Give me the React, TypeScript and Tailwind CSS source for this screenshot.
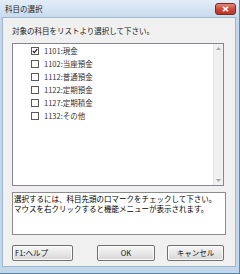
import React from "react";

const font = { fontFamily: '"Noto Sans CJK JP", "Liberation Sans", sans-serif' };

function Check({ checked }: { checked?: boolean }) {
  return (
    <div className="w-[8px] h-[8px] border border-[#5a5a5a] bg-white flex items-center justify-center shrink-0">
      {checked && (
        <svg width="6" height="6" viewBox="0 0 6 6">
          <path d="M0.8 3 L2.4 4.6 L5.2 1.2" stroke="#222" strokeWidth="1.3" fill="none" />
        </svg>
      )}
    </div>
  );
}

function Btn({ w, label }: { w: string; label: string }) {
  return (
    <div
      className={`${w} h-[16px] border border-[#707070] rounded-[2px] bg-gradient-to-b from-[#f6f6f6] via-[#e8e8e8] to-[#d6d6d6] flex items-center text-[7.5px] text-[#111] shadow-[inset_0_0_0_1px_#fbfbfb]`}
    >
      {label}
    </div>
  );
}

export default function App() {
  const items = [
    ["1101:現金", true],
    ["1102:当座預金", false],
    ["1112:普通預金", false],
    ["1122:定期預金", false],
    ["1127:定期積金", false],
    ["1132:その他", false],
  ] as const;
  return (
    <div
      className="w-[240px] h-[274px] bg-[#c3d7ec] flex flex-col overflow-hidden border-r border-b border-[#5f87a8]"
      style={font}
    >
      <div className="h-[17px] shrink-0 flex items-center justify-between pl-[5px] pr-[3px] bg-gradient-to-b from-[#e3edf8] to-[#c8dbef]">
        <span className="text-[7.5px] text-[#1e1e1e] leading-none mt-[1px]">科目の選択</span>
        <div className="w-[21px] h-[12px] mt-[1px] rounded-[3px] border border-[#7a2a22] bg-gradient-to-b from-[#e2887a] via-[#cc4a3a] to-[#b8352a] flex items-center justify-center">
          <svg width="7" height="6" viewBox="0 0 7 6">
            <path d="M1 0.8 L6 5.2 M6 0.8 L1 5.2" stroke="#fff" strokeWidth="1.6" />
          </svg>
        </div>
      </div>
      <div className="flex-1 ml-[2px] mr-[3px] mb-[6px] bg-[#f0f0f0] border border-[#9fb7d0] flex flex-col pl-[9px] pr-[9px]">
        <div className="mt-[8px] h-[10px] text-[7.5px] leading-[10px] text-[#222]">
          対象の科目をリストより選択して下さい。
        </div>
        <div className="mt-[7px] w-[212px] h-[143px] border border-[#828790] bg-white flex">
          <div className="flex-1 flex flex-col">
            {items.map(([t, c]) => (
              <div key={t} className="h-[13px] flex items-center pl-[18px] gap-[5px]">
                <Check checked={c} />
                <span className="text-[7.5px] text-[#333] leading-none">{t}</span>
              </div>
            ))}
          </div>
          <div className="w-[10px] bg-[#f0f0f0] border-l border-[#e4e4e4] flex flex-col justify-between items-center py-[3px]">
            <svg width="5" height="3" viewBox="0 0 5 3">
              <path d="M0 3 L2.5 0 L5 3 Z" fill="#a8a8a8" />
            </svg>
            <svg width="5" height="3" viewBox="0 0 5 3">
              <path d="M0 0 L2.5 3 L5 0 Z" fill="#a8a8a8" />
            </svg>
          </div>
        </div>
        <div className="mt-[6px] w-[214px] h-[43px] border border-[#8c8c8c] bg-white px-[1px] pt-[1px] text-[7.5px] leading-[9.5px] text-black">
          <div>選択するには、科目先頭の口マークをチェックして下さい。</div>
          <div>マウスを右クリックすると機能メニューが表示されます。</div>
        </div>
        <div className="mt-[10px] flex">
          <Btn w="w-[61px] pl-[2px]" label="F1:ヘルプ" />
          <div className="ml-[24px]">
            <Btn w="w-[58px] justify-center" label="OK" />
          </div>
          <div className="ml-[12px]">
            <Btn w="w-[57px] justify-center" label="キャンセル" />
          </div>
        </div>
      </div>
    </div>
  );
}
